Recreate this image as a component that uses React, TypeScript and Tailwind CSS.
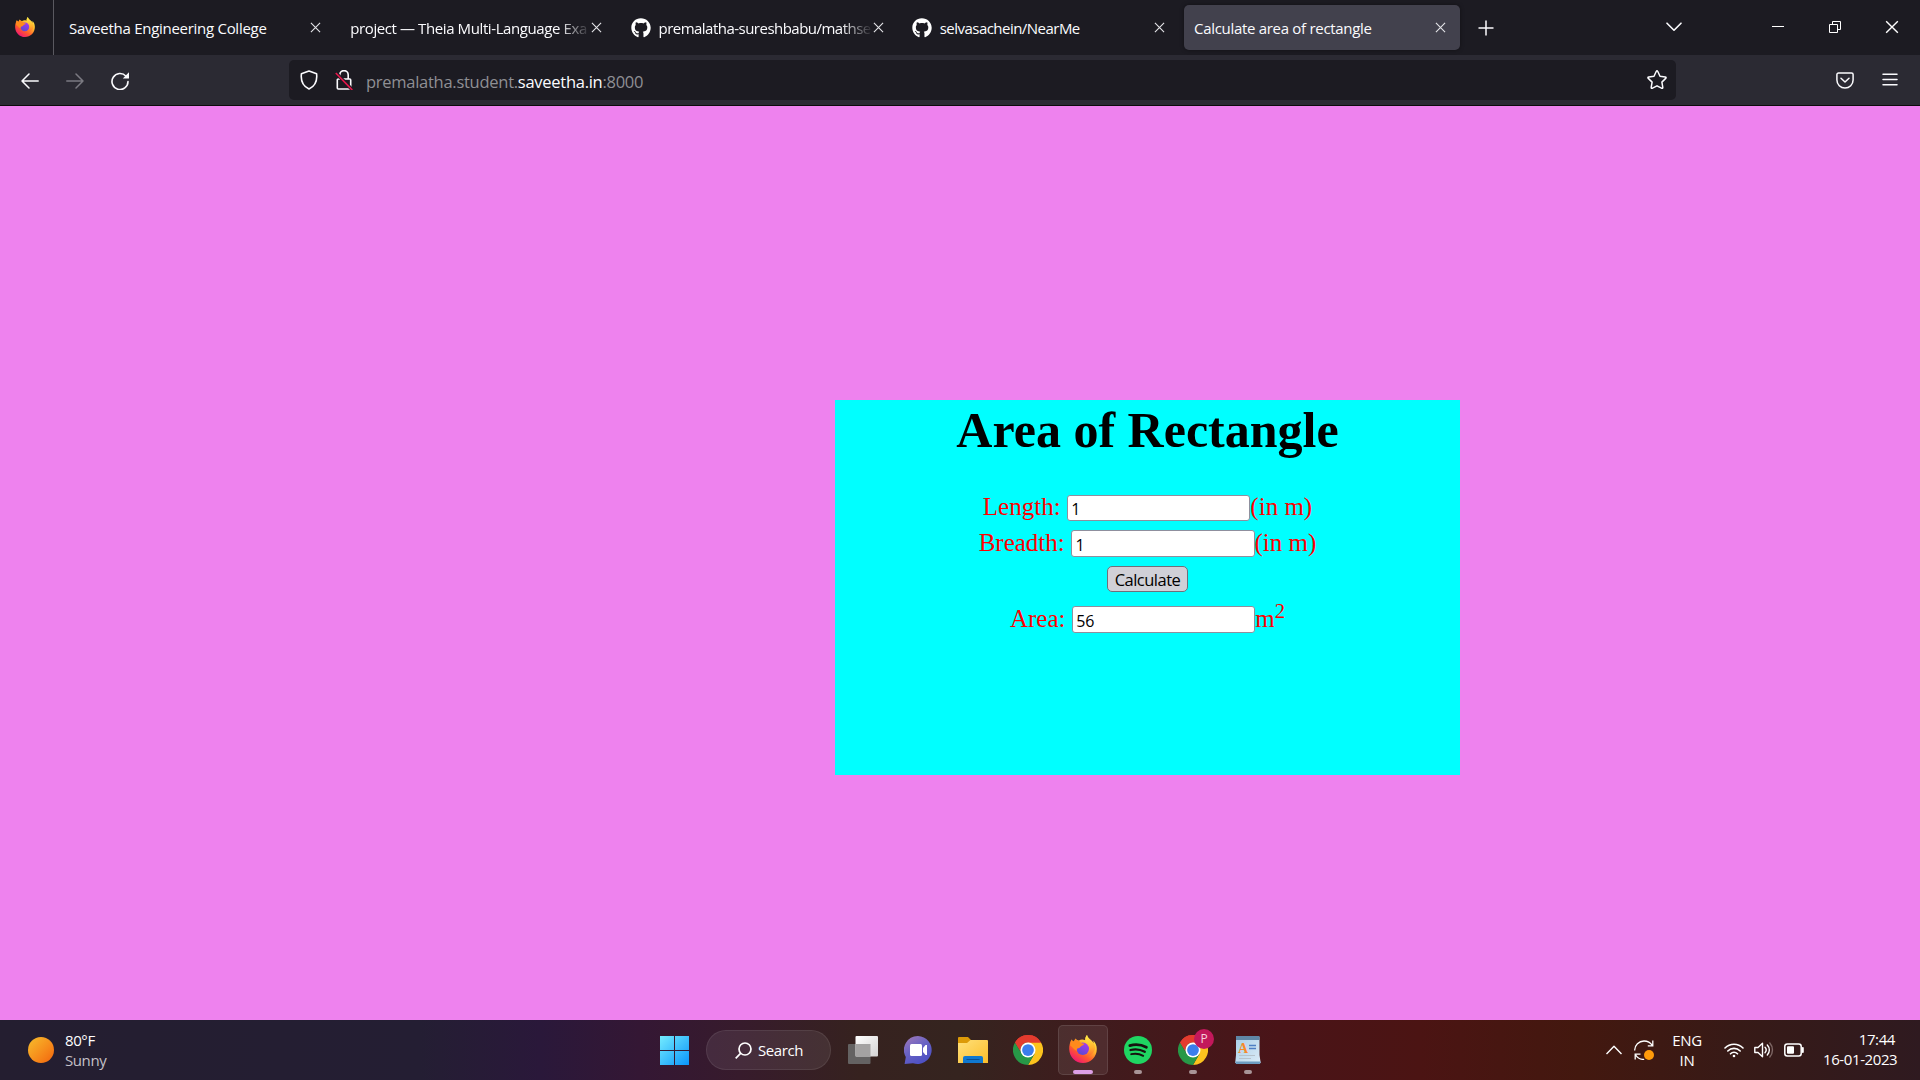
import type { ReactNode } from "react";
import { FaGithub } from "react-icons/fa";

function Firefox({ id, className }: { id: string; className: string }) {
  return (
    <svg viewBox="0 0 28 28" className={className}>
      <defs>
        <linearGradient id={id + "a"} x1="0.85" y1="0.1" x2="0.25" y2="1">
          <stop offset="0" stopColor="#fff34a" />
          <stop offset="0.35" stopColor="#ffb42a" />
          <stop offset="0.65" stopColor="#ff5a2c" />
          <stop offset="1" stopColor="#f0107a" />
        </linearGradient>
        <linearGradient id={id + "b"} x1="0.8" y1="0" x2="0.3" y2="1">
          <stop offset="0" stopColor="#a838f0" />
          <stop offset="1" stopColor="#5a4ad0" />
        </linearGradient>
        <linearGradient id={id + "c"} x1="0.5" y1="0" x2="0.5" y2="1">
          <stop offset="0" stopColor="#ffef48" />
          <stop offset="0.6" stopColor="#ffb02c" />
          <stop offset="1" stopColor="#ff5430" stopOpacity="0.3" />
        </linearGradient>
      </defs>
      <path
        d="M18 0c-1.400 1.600-2 3.500-1.800 5.200-2.200-.9-4.600-.8-6.200.3C8.700 5.600 7.300 5 6.600 3.600 5.700 4.600 5.300 5.600 5.200 6.600 4 6.300 3 5.500 2.600 4.400 1 7 .1 10.500.2 14.200.5 22 6.400 28 14 28s13.800-6 13.800-14c0-3.700-1.500-6.600-3.500-8.600.3 1.200.4 2.200.3 3.200C23 4.600 18.800 4.200 18 0z"
        fill={`url(#${id}a)`}
      />
      <circle cx="13.800" cy="13.800" r="6.200" fill={`url(#${id}b)`} />
      <path
        d="M18 0c-1.600 2-2.200 4.600-.8 7 1.400 2 3.400 3.400 3.400 7 0 4-3.200 6.800-7 6.800 5.600 2.600 12-1.800 12.400-7.800.2-4-1.600-5.200-3.400-7.300C20.600 3.800 18.600 2.800 18 0z"
        fill={`url(#${id}c)`}
      />
      <path
        d="M2.600 4.600c.6 1.200 1.500 1.800 2.700 2 .1-1 .6-2 1.300-2.800C7.400 5.400 9 6 10.400 6.200c1.600 2 2.800 2.300 5 2.600-.2 1.200-2.400 1.800-3.600 2.700-.8.600-.8 1.600-2.600 1.800-1.500.2-1.600 1.600-1.400 2.700-2.200-1-4.600-4.400-6.600-5.600.1-2 .6-4 1.400-5.800z"
        fill="#ff8a1c"
      />
    </svg>
  );
}

function Chrome() {
  return (
    <svg viewBox="0 0 48 48" className="size-[30px]">
      <path d="M24 24 3.200 12A24 24 0 0 1 44.800 12z" fill="#e33b2e" />
      <path d="M24 24V12h20.800A24 24 0 0 1 24 48l10.400-18z" fill="#fcc31e" />
      <path d="M3.200 12A24 24 0 0 0 24 48l10.400-18H24L13.600 30z" fill="#279847" />
      <path d="M3.200 12 13.600 30 24 24V12z" fill="#279847" />
      <path d="M3.200 12A24 24 0 0 1 44.800 12H24c-5 0-9 3-11 7l-1.200 7z" fill="#e33b2e" />
      <circle cx="24" cy="24" r="12" fill="#fff" />
      <circle cx="24" cy="24" r="9.400" fill="#3b7ded" />
    </svg>
  );
}

function Close({ className }: { className: string }) {
  return (
    <svg viewBox="0 0 12 12" className={className} fill="none" stroke="currentColor" strokeWidth="1.2">
      <path d="M1 1l10 10M11 1L1 11" />
    </svg>
  );
}

function Tab({ title, active, fade, github, tracking }: { title: string; active?: boolean; fade?: boolean; github?: boolean; tracking: string }) {
  return (
    <div className={"flex h-[45px] w-[276px] shrink-0 items-center rounded-[5px] pl-[10px] " + (active ? "bg-[#42414d] shadow-[0_0_4px_rgba(0,0,0,0.4)]" : "")}>
      {github && <FaGithub className="mr-[8px] -ml-px size-5 shrink-0 text-white" />}
      <span
        className={
          "flex-1 text-[15px] leading-5 whitespace-nowrap text-[#fbfbfe] " +
          tracking +
          (fade ? " [mask-image:linear-gradient(to_right,black_calc(100%-32px),transparent)]" : "")
        }
      >
        {title}
      </span>
      <Close className="mr-[14px] size-[11px] shrink-0 text-[#e4e4e8]" />
    </div>
  );
}

function Field({ label, value, children, className, box }: { label: string; value: string; children: ReactNode; className: string; box: string }) {
  return (
    <div className={"flex items-center justify-center text-[25px] leading-[28px] text-[#ff0000] " + className}>
      <label className="mr-[6.250px]">{label}</label>
      <input
        defaultValue={value}
        className={
          "w-[183.500px] rounded-[3px] border border-[#8f8f9d] bg-white px-[3.500px] font-['Open_Sans',sans-serif] text-[16px] leading-5 text-black outline-none " +
          box
        }
      />
      <span>{children}</span>
    </div>
  );
}

function Cell({ children, bar, active }: { children: ReactNode; bar?: string; active?: boolean }) {
  return (
    <div className={"relative flex size-[50px] items-center justify-center rounded-[5px] " + (active ? "border border-white/10 bg-white/8" : "")}>
      {children}
      {bar && <span className={"absolute bottom-[1px] h-1 rounded-full " + bar} />}
    </div>
  );
}

export default function App() {
  return (
    <div className="flex h-[1080px] w-[1920px] flex-col overflow-hidden bg-[#ee82ee] font-['Open_Sans',sans-serif]">
      <header className="flex h-[55px] shrink-0 bg-[#1c1b22]">
        <div className="flex w-[54px] shrink-0 justify-center border-r border-[#5a5960] pt-[17px] pr-[3px]">
          <Firefox id="f1" className="size-5" />
        </div>
        <nav className="ml-[5px] flex gap-[5.250px] pt-[5px]">
          <Tab title="Saveetha Engineering College" tracking="tracking-[-0.28px]" />
          <Tab title="project — Theia Multi-Language Exa" fade tracking="tracking-[-0.4px]" />
          <Tab title="premalatha-sureshbabu/mathse" fade github tracking="tracking-[-0.52px]" />
          <Tab title="selvasachein/NearMe" github tracking="tracking-[-0.53px]" />
          <Tab title="Calculate area of rectangle" active tracking="tracking-[-0.3px]" />
        </nav>
        <svg viewBox="0 0 16 16" className="mt-5 ml-[18px] size-4 text-[#fbfbfe]" fill="none" stroke="currentColor" strokeWidth="1.500">
          <path d="M8 .5v15M.5 8h15" />
        </svg>
        <div className="flex-1" />
        <svg viewBox="0 0 16 10" className="mt-[22px] mr-[90px] h-[10px] w-4 text-[#fbfbfe]" fill="none" stroke="currentColor" strokeWidth="1.600" strokeLinecap="round" strokeLinejoin="round">
          <path d="M1 1.200l7 7 7-7" />
        </svg>
        <span className="mt-[26px] mr-[45px] h-px w-3 bg-white" />
        <svg viewBox="0 0 12 12" className="mt-[21px] mr-11 size-3" fill="none" stroke="#fff">
          <path d="M.5 3.500h8v8h-8zM3.500 3.500v-3h8v8h-3" />
        </svg>
        <Close className="mt-5 mr-[21px] size-[14px] text-white" />
      </header>

      <div className="flex h-[51px] shrink-0 items-center border-b border-[#0c0c0d] bg-[#2b2a33] text-[#fbfbfe]">
        <svg viewBox="0 0 18 16" className="mt-px ml-[21px] h-4 w-[18px]" fill="none" stroke="currentColor" strokeWidth="1.500" strokeLinecap="round" strokeLinejoin="round">
          <path d="M17.200 8H1M8 1L1 8l7 7" />
        </svg>
        <svg viewBox="0 0 18 16" className="mt-px ml-[27px] h-4 w-[18px] text-[#7b7a82]" fill="none" stroke="currentColor" strokeWidth="1.500" strokeLinecap="round" strokeLinejoin="round">
          <path d="M.8 8H17M10 1l7 7-7 7" />
        </svg>
        <svg viewBox="0 0 18 18" className="mt-px ml-[27px] size-[18px]" fill="none" stroke="currentColor" strokeWidth="1.600" strokeLinecap="round">
          <path d="M15 4.200A8 8 0 1 0 17 9.500" />
          <path d="M18 .3v6.200h-6.200z" fill="currentColor" stroke="none" />
        </svg>
        <div className="ml-40 flex h-10 w-[1387px] items-center rounded-[5px] bg-[#1c1b22]">
          <svg viewBox="0 0 18 20" className="ml-[11px] h-5 w-[18px]" fill="none" stroke="currentColor" strokeWidth="1.600" strokeLinejoin="round">
            <path d="M9 1l7.600 2.800c.7 6-1 12-7.600 15.200C2.400 15.800.700 9.800 1.400 3.800z" />
          </svg>
          <svg viewBox="0 0 18 20" className="ml-[17px] h-5 w-[18px]" fill="none" stroke="currentColor" strokeWidth="1.600">
            <path d="M4.800 9V4.800a4.200 4.200 0 0 1 8.400 0V9M3.300 9h11.400a1 1 0 0 1 1 1v8a1 1 0 0 1-1 1H3.300a1 1 0 0 1-1-1v-8a1 1 0 0 1 1-1z" />
            <path d="M1 3l16.500 17" stroke="#1c1b22" strokeWidth="3.500" />
            <path d="M.8 3l16.500 17" stroke="#e6174b" strokeWidth="1.700" />
          </svg>
          <span className="ml-[13px] pt-[4px] text-[16.500px] leading-6 tracking-[-0.27px] whitespace-nowrap text-[#8f8f94]">
            premalatha.student.<span className="text-[#fbfbfe]">saveetha.in</span>:8000
          </span>
          <div className="flex-1" />
          <svg viewBox="0 0 20 20" className="mr-[9px] size-5" fill="none" stroke="currentColor" strokeWidth="1.500" strokeLinejoin="round">
            <path d="M9.200 1.500q.8-1.400 1.600 0l2.200 4.700 5.200.7q1.500.3.500 1.500l-3.800 3.700.9 5.200q.1 1.500-1.300.9L10 15.800l-4.500 2.400q-1.400.6-1.300-.9l.9-5.200L1.300 8.400q-1-1.200.5-1.500L7 6.200z" />
          </svg>
        </div>
        <div className="flex-1" />
        <svg viewBox="0 0 18 17" className="mr-7 h-[17px] w-[18px]" fill="none" stroke="currentColor" strokeWidth="1.500" strokeLinecap="round" strokeLinejoin="round">
          <path d="M2.500 1h13a1.600 1.600 0 0 1 1.600 1.600V8a8.100 8.100 0 0 1-16.200 0V2.600A1.600 1.600 0 0 1 2.500 1z" />
          <path d="M5 6.300l4 3.700 4-3.700" />
        </svg>
        <svg viewBox="0 0 16 13" className="mr-[22px] mb-px h-[13px] w-4" stroke="currentColor" strokeWidth="1.500" strokeLinecap="round">
          <path d="M1 1.300h14M1 6.500h14M1 11.700h14" />
        </svg>
      </div>

      <main className="flex flex-1 pt-[294px] pl-[835px]">
        <section className="h-[375px] w-[625px] bg-[#00ffff] font-['Liberation_Serif',serif]">
          <h1 className="text-center text-[50px] leading-[60px] font-bold text-black">Area of Rectangle</h1>
          <Field label="Length:" value="1" className="mt-[33px] h-[28px]" box="mt-[2px] h-[26px] pt-[2px]">(in m)</Field>
          <Field label="Breadth:" value="1" className="mt-2 h-[28px]" box="mt-px h-[27px] pt-[3px]">(in m)</Field>
          <div className="mt-2 flex h-[28px] justify-center">
            <button className="mt-px h-[26px] w-[81px] rounded-[5px] border border-[#6f6f7a] bg-[#d0d0d7] font-['Open_Sans',sans-serif] text-[16.500px] leading-[26px] tracking-[-0.5px] text-black">
              Calculate
            </button>
          </div>
          <Field label="Area:" value="56" className="mt-[12px] h-[28px]" box="mt-px h-[27px] pt-[3px]">
            m<sup className="top-[-0.44em] text-[20.800px]">2</sup>
          </Field>
        </section>
      </main>

      <footer className="flex h-[60px] shrink-0 items-center bg-[linear-gradient(to_right,#241e30_0px,#241e33_420px,#2a183a_540px,#341734_640px,#371b2c_740px,#36221f_860px,#35241f_960px,#401b1d_1100px,#4a1418_1280px,#4b1413_1420px,#43180f_1580px,#371a17_1740px,#2f1a20_1920px)] text-[15px] leading-5 text-white">
        <div className="flex w-[649px] items-center">
          <span className="ml-7 size-[26px] rounded-full bg-linear-to-br from-[#f6bd2c] to-[#f2620c]" />
          <div className="ml-[11px] tracking-[-0.4px]">
            <div>80°F</div>
            <div className="text-[#c4c1c8]">Sunny</div>
          </div>
        </div>
        <Cell>
          <svg viewBox="0 0 29 29" className="size-[29px]">
            <defs>
              <linearGradient id="win" gradientUnits="userSpaceOnUse" x1="0" y1="0" x2="29" y2="29">
                <stop offset="0" stopColor="#74ecff" />
                <stop offset="1" stopColor="#0a94fa" />
              </linearGradient>
            </defs>
            <path d="M0 0h14v14H0zM15 0h14v14H15zM0 15h14v14H0zM15 15h14v14H15z" fill="url(#win)" />
          </svg>
        </Cell>
        <div className="mr-[7px] ml-[7px] flex h-10 w-[125px] items-center rounded-full border border-white/8 bg-white/8">
          <svg viewBox="0 0 17 17" className="ml-[28px] size-[17px]" fill="none" stroke="#fff" strokeWidth="1.700">
            <circle cx="10" cy="7" r="6" />
            <path d="M5.800 11.200L.7 16.300" />
          </svg>
          <span className="ml-[6px] tracking-[-0.4px]">Search</span>
        </div>
        <div className="flex gap-[5px]">
          <Cell>
            <svg viewBox="0 0 30 28" className="h-7 w-[30px]">
              <defs>
                <linearGradient id="tv" x1="0" y1="0" x2="1" y2="1">
                  <stop offset="0" stopColor="#fff" />
                  <stop offset="1" stopColor="#d4d2d2" />
                </linearGradient>
              </defs>
              <rect y="8" width="22.500" height="20" rx="1" fill="#646262" />
              <rect x="7.500" width="22.500" height="20.500" rx="1" fill="url(#tv)" />
              <path d="M7.500 8h15v12.500h-15z" fill="#a4a2a2" />
            </svg>
          </Cell>
          <Cell>
            <svg viewBox="0 0 28 28" className="size-7">
              <defs>
                <linearGradient id="ct" x1="0" y1="0" x2="0.6" y2="1">
                  <stop offset="0" stopColor="#a57bb8" />
                  <stop offset="0.5" stopColor="#6a63c4" />
                  <stop offset="1" stopColor="#4d50c4" />
                </linearGradient>
              </defs>
              <path d="M14 0a14 14 0 1 1-5 27.200L.6 28l1.200-7A14 14 0 0 1 14 0z" fill="url(#ct)" />
              <rect x="6" y="8" width="12" height="12" rx="1.500" fill="#fff" />
              <path d="M19 12l2.500-3H23v10h-1.500L19 16z" fill="#fff" />
            </svg>
          </Cell>
          <Cell>
            <svg viewBox="0 0 30 26" className="h-[26px] w-[30px]">
              <defs>
                <linearGradient id="fe" x1="0" y1="0" x2="1" y2="1">
                  <stop offset="0" stopColor="#ffe07a" />
                  <stop offset="1" stopColor="#fbbd2a" />
                </linearGradient>
              </defs>
              <path d="M0 1a1 1 0 0 1 1-1h9l3 3h16v8H0z" fill="#dc9a08" />
              <path d="M0 6h9l3.500-3H29a1 1 0 0 1 1 1v22H0z" fill="url(#fe)" />
              <path d="M5 26v-5a2 2 0 0 1 2-2h16a2 2 0 0 1 2 2v5z" fill="#0f78d0" />
              <path d="M8.500 22.500h13" stroke="#0a4f94" />
            </svg>
          </Cell>
          <Cell>
            <Chrome />
          </Cell>
          <Cell active bar="w-5 -mb-px bg-[#dc9fe6]">
            <Firefox id="f2" className="mb-[2px] size-[28px]" />
          </Cell>
          <Cell bar="w-2 bg-[#a89497]">
            <svg viewBox="0 0 28 28" className="size-7" fill="none" stroke="#17120f" strokeLinecap="round">
              <circle cx="14" cy="14" r="14" fill="#1fd662" stroke="none" />
              <path d="M5.800 9.600c5.500-1.500 11.500-1 16.600 1.700" strokeWidth="2.700" />
              <path d="M6.500 14c4.800-1.300 9.800-.7 14.300 1.700" strokeWidth="2.300" />
              <path d="M7.200 18.200c4.200-1 8.300-.5 12 1.600" strokeWidth="1.900" />
            </svg>
          </Cell>
          <Cell bar="w-2 bg-[#a89497]">
            <Chrome />
            <span className="absolute top-1 left-[26px] flex size-5 items-center justify-center rounded-full bg-[#c2185b] text-[12px] text-[#f6cfdd]">P</span>
          </Cell>
          <Cell bar="w-2 bg-[#a89497]">
            <svg viewBox="0 0 26 28" className="h-7 w-[26px]">
              <defs>
                <linearGradient id="wp" x1="0" y1="0" x2="1" y2="1">
                  <stop offset="0" stopColor="#a9cfe8" />
                  <stop offset="1" stopColor="#dcebf6" />
                </linearGradient>
              </defs>
              <path d="M1 1h23.500v18l1.200 8H.2L1 19z" fill="url(#wp)" />
              <path d="M1 0h23.500v4H1z" fill="#5f87a6" />
              <path d="M.2 25.500h25.600L25 28H1z" fill="#6d9bc0" />
              <path d="M14 9.500h7M14 12.500h7" stroke="#4e7fc4" strokeWidth="1.600" />
              <path d="M4 19.500h16M4 22.500h12" stroke="#b6c2cc" strokeWidth="1.200" />
              <text x="3" y="17" fontSize="14" fontWeight="bold" fill="#f78a2a" fontFamily="Liberation Serif">A</text>
            </svg>
          </Cell>
        </div>
        <div className="flex-1" />
        <svg viewBox="0 0 16 10" className="h-[10px] w-4" fill="none" stroke="#fff" strokeWidth="1.400" strokeLinejoin="round">
          <path d="M.5 9L8 1.300 15.500 9" />
        </svg>
        <svg viewBox="0 0 20 20" className="ml-3 size-5" fill="none" stroke="#fff" strokeWidth="1.300">
          <path d="M.7 10.500C.5 5 5 1 10 1c3.500 0 6.500 1.600 8.300 4.500M18.800.5v5.300h-5M1.200 19.500v-5.300h5.300M1.700 15c1.800 3 5 4.700 8.500 4.300" />
          <circle cx="15" cy="15" r="5" fill="#ff9b0a" stroke="none" />
        </svg>
        <div className="ml-[18px] w-[30px] text-center tracking-[-0.3px]">
          <div>ENG</div>
          <div>IN</div>
        </div>
        <svg viewBox="0 0 20 16" className="ml-[22px] h-4 w-5" fill="none" stroke="#fff" strokeWidth="1.600" strokeLinecap="round">
          <path d="M1 6a12.700 12.700 0 0 1 18 0M3.800 9a8.700 8.700 0 0 1 12.400 0M6.500 11.800a5 5 0 0 1 7 0" />
          <circle cx="10" cy="14" r="1.300" fill="#fff" stroke="none" />
        </svg>
        <svg viewBox="0 0 20 16" className="ml-[10px] h-4 w-5" fill="none" stroke="#fff" strokeWidth="1.400" strokeLinecap="round" strokeLinejoin="round">
          <path d="M.8 5.500h3.200L8.500 1.300v13.400L4 10.500H.8zM11 5.300a4 4 0 0 1 0 5.400M13.300 3a7.200 7.200 0 0 1 0 10" />
          <path d="M15.800 1a10.500 10.500 0 0 1 0 14" stroke="#7d6664" />
        </svg>
        <svg viewBox="0 0 20 14" className="ml-[10px] h-[14px] w-5" fill="none" stroke="#fff" strokeWidth="1.500">
          <rect x=".8" y="1" width="16.400" height="12" rx="2.500" />
          <rect x="3" y="3.200" width="7" height="7.600" rx="1" fill="#fff" stroke="none" />
          <path d="M18.800 5v4" strokeWidth="2" strokeLinecap="round" />
        </svg>
        <div className="mr-[25px] ml-[19px] w-[72px] text-right tracking-[-0.4px] whitespace-nowrap">
          <div className="-mt-[2px]">17:44</div>
          <div>16-01-2023</div>
        </div>
      </footer>
    </div>
  );
}
